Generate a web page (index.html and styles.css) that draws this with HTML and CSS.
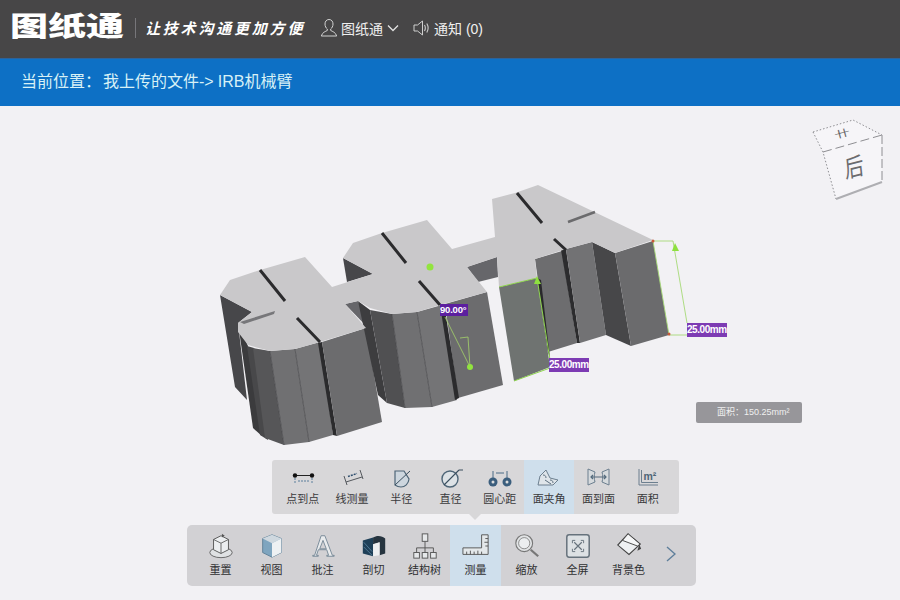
FILE: index.html
```html
<!DOCTYPE html>
<html lang="zh-CN">
<head>
<meta charset="utf-8">
<title>图纸通</title>
<link rel="stylesheet" href="styles.css">
</head>
<body>
<div class="page">
  <header class="topbar">
    <div class="logo">图纸通</div>
    <div class="divider"></div>
    <div class="slogan">让技术沟通更加方便</div>
    <div class="nav-user">
      <svg class="nav-icon" viewBox="0 0 18 20" width="18" height="20"><path d="M9 1.500c-2.600 0-4 2-4 4.500 0 2.300 1 4 2.300 5v1.500c-1.500.8-5 1.800-6 5.500h15.400c-1-3.700-4.500-4.700-6-5.500V11c1.300-1 2.300-2.700 2.300-5 0-2.500-1.400-4.500-4-4.500z" fill="none" stroke="#d2d2d2" stroke-width="1"/></svg>
      <span>图纸通</span>
      <svg class="chev" viewBox="0 0 12 8" width="12" height="8"><path d="M1 1.500l5 5 5-5" fill="none" stroke="#e2e2e2" stroke-width="1.300"/></svg>
    </div>
    <div class="nav-notice">
      <svg class="nav-icon" viewBox="0 0 17 16" width="17" height="16"><path d="M1 5h3.500L9.500 1v14l-5-4H1z" fill="none" stroke="#cfcfcf" stroke-width="1"/><path d="M11.500 5c1 1.800 1 4.200 0 6M13.800 3.500c1.600 2.700 1.600 6.300 0 9" fill="none" stroke="#cfcfcf" stroke-width="1.100"/></svg>
      <span>通知 (0)</span>
    </div>
  </header>

  <div class="crumb"><span class="crumb-label">当前位置：</span><span>我上传的文件<span class="crumb-arrow">-&gt;</span>IRB机械臂</span></div>

  <main class="viewer">
    <svg class="model" viewBox="0 106 900 494" width="900" height="494">
      <!-- left block sides -->
      <polygon fill="#47474a" points="220,295 252,312 238,323 247,400 235,387"/>
      <polygon fill="#3b3b3d" points="238,323 248,346 262,436 253,428"/>
      <polygon fill="#48484a" points="247,346 254,348 268,440 260,435"/>
      <polygon fill="#565658" points="253,348 270,351 284,445 265,438"/>
      <polygon fill="#707072" points="270,351 295,349 309,442 284,445"/>
      <polygon fill="#747476" points="295,349 320,342 333,435 309,442"/>
      <polygon fill="#2b2b2d" points="318,343 322,342 337,436 333,435"/>
      <polygon fill="#6c6c6e" points="322,342 366,328 382,422 337,436"/>
      <path d="M270 351l14 94M295 349l14 93" stroke="#444446" stroke-width=".7"/>
      <!-- bridge underside -->
      <polygon fill="#66666a" points="345,304 358,301 368,328"/>
      <polygon fill="#66666a" points="467,267 497,257 498,277 478,282"/>
      <!-- middle block sides -->
      <polygon fill="#47474a" points="343,258 373,274 347,282"/>
      <polygon fill="#3d3d3f" points="358,301 370,310 387,403 378,395"/>
      <polygon fill="#505052" points="370,310 392,314 405,408 387,403"/>
      <polygon fill="#707072" points="392,314 417,312 432,407 405,408"/>
      <polygon fill="#747476" points="417,312 442,305 457,400 432,407"/>
      <polygon fill="#6c6c6e" points="445,304 487,292 503,385 458,398"/>
      <polygon fill="#2b2b2d" points="440,305 446,316 459,398 455,400"/>
      <path d="M392 314l13 94M417 312l15 95" stroke="#444446" stroke-width=".7"/>
      <!-- right block sides -->
      <polygon fill="#6f7371" points="499,287 537,278 550,367 514,381"/>
      <polygon fill="#6d6d6f" points="535,259 562,251 577,343 548,352"/>
      <polygon fill="#29292b" points="537,278 541,280 550,358 548,352"/>
      <polygon fill="#2c2c2e" points="561,250 566,249 580,343 577,343"/>
      <polygon fill="#727274" points="566,249 592,242 606,335 580,343"/>
      <polygon fill="#474749" points="592,242 615,253 631,346 606,335"/>
      <polygon fill="#6b6b6d" points="615,253 653,241 669,335 631,346"/>
      <!-- top face -->
      <polygon fill="#c9c8ca" points="220,295 230,280 260,270 305,257 332,287 373,274 343,258 353,243 382,233 427,220 452,249 495,237 492,199 515,193 538,185 653,240 615,253 592,242 566,249 535,259 537,278 499,287 497,257 467,267 487,292 440,305 417,312 392,314 370,308 358,301 345,304 366,328 320,342 295,349 270,351 248,345 238,332 238,323 252,312"/>
      <polygon fill="#77777a" points="240,322 275,311 274,314 244,324"/>
      <!-- slots -->
      <path d="M260 270l25 31M297 318l23 24M382 233l24 30M419 281l21 24M517 193l25 30M554 239l12 11" stroke="#2b2b2d" stroke-width="3" fill="none"/>
      <path d="M568 222l27-10" stroke="#6b6b6d" stroke-width="2.500" fill="none"/>
      <!-- measures -->
      <circle cx="430" cy="267" r="3.500" fill="#92e43f"/>
      <path d="M445 317l25 50-2-30-8 1" fill="none" stroke="#a5d36a" stroke-width=".8"/>
      <circle cx="470" cy="367" r="3" fill="#92e43f"/>
      <path d="M499 287l38-9 13 82M514 381l36-13" fill="none" stroke="#8ed44d" stroke-width="1"/>
      <polygon points="537,276 534,284 541,284" fill="#8ee03f"/>
      <path d="M653 241h20l14 82M669 335h18M653 241l16 94" fill="none" stroke="#a6d976" stroke-width=".9"/>
      <polygon points="675,243 672,251 679,251" fill="#8ee03f"/>
      <circle cx="653" cy="241" r="1.500" fill="#c9593a"/>
      <circle cx="669" cy="334" r="1.500" fill="#c9593a"/>
      <!-- view cube -->
      <polygon points="813,132 853,120 882,135 882,182 836,199 823,152" fill="#f6f5f8"/>
      <g fill="none" stroke="#8e8e92">
        <path d="M813 132l40-12 29 15" stroke-dasharray="1.500 2"/>
        <path d="M813 132l10 20 13 47" stroke-dasharray="1.500 2"/>
        <path d="M823 152l59-17" stroke-dasharray="9 4"/>
        <path d="M882 135v47" stroke-dasharray="9 3"/>
        <path d="M836 199l46-17" stroke="#aeaeb2" stroke-width="2"/>
      </g>
      <text class="cube-top" transform="translate(843 137) rotate(-15) scale(1 .6)">卄</text>
      <text class="cube-front" transform="translate(855 176) rotate(-14) skewX(-8) scale(.85 1.05)">后</text>
    </svg>

    <div class="label label-angle">90.00°</div>
    <div class="label label-mid">25.00mm</div>
    <div class="label label-right">25.00mm</div>
    <div class="area">面积：150.25mm²</div>

    <div class="subtools">
      <div class="tool"><svg viewBox="0 0 28 24"><path d="M6 8.500h17" stroke="#222" stroke-width="1"/><circle cx="6" cy="8.500" r="2.200" fill="#111"/><circle cx="23" cy="8.500" r="2.200" fill="#111"/><path d="M6 11v5M23 11v5M9 14h11" stroke="#5a7f9c" stroke-width="1" stroke-dasharray="2 1"/></svg><span>点到点</span></div>
      <div class="tool"><svg viewBox="0 0 28 24"><path d="M6 9l3 9M22 3l3 9M8 15l16-5" fill="none" stroke="#55595e" stroke-width="1"/><path d="M10 9.500l9-3" stroke="#2f4f6f" stroke-width="1.500" stroke-dasharray="2 1"/></svg><span>线测量</span></div>
      <div class="tool"><svg viewBox="0 0 28 24"><path d="M8 4h9l5 8c-.5 5-4 8-8 8-2 0-4-.5-6-2z" fill="#cdd6de" stroke="#4e6577" stroke-width="1.200"/><path d="M8 18L23 4" stroke="#3a4e5e" stroke-width="1"/></svg><span>半径</span></div>
      <div class="tool"><svg viewBox="0 0 28 24"><circle cx="13" cy="12" r="8" fill="#dde2e6" stroke="#4e6577" stroke-width="1.400"/><path d="M7 18L22 3M22 3h4" fill="none" stroke="#3a4e5e" stroke-width="1.100"/></svg><span>直径</span></div>
      <div class="tool"><svg viewBox="0 0 28 24"><circle cx="7" cy="15" r="4.500" fill="#3b5e7d"/><circle cx="21" cy="15" r="4.500" fill="#3b5e7d"/><circle cx="7" cy="15" r="1.500" fill="#ddd"/><circle cx="21" cy="15" r="1.500" fill="#ddd"/><path d="M7 4v8M21 4v8M10 6h8" stroke="#3b5e7d" stroke-width=".9" fill="none"/></svg><span>圆心距</span></div>
      <div class="tool is-on"><svg viewBox="0 0 28 24"><path d="M3 18l2-9 6-6 4 8 8 2-5 5z" fill="#dfe5ea" stroke="#6c7f8f" stroke-width="1"/><path d="M8 8c2 0 3 1 3 3M10 13l6 4M15 13c2 0 3 1 3 3" fill="none" stroke="#5c6f7f" stroke-width="1"/></svg><span>面夹角</span></div>
      <div class="tool"><svg viewBox="0 0 28 24"><path d="M4 2l7 3c-1 3-1 7 0 10l-7 3zM25 2l-7 3c1 3 1 7 0 10l7 3z" fill="#d6dadd" stroke="#6c7f8f" stroke-width="1"/><path d="M7 10h15M9 8l-2 2 2 2M20 8l2 2-2 2" fill="none" stroke="#546a7c" stroke-width="1.200"/></svg><span>面到面</span></div>
      <div class="tool"><svg viewBox="0 0 28 24"><path d="M5 2v16h19M7.500 3v12.500H24" fill="none" stroke="#6c7f8f" stroke-width="1"/><text class="m2" x="9.500" y="12.500">m²</text></svg><span>面积</span></div>
    </div>
    <div class="caret"></div>
    <div class="maintools">
      <div class="tool"><svg viewBox="0 0 30 30"><ellipse cx="15" cy="22" rx="12" ry="5.500" fill="#dfe1e3" stroke="#555" stroke-width=".9"/><path d="M15 4l8 4v11l-8 4-8-4V8z" fill="#eceef0" stroke="#555" stroke-width="1"/><path d="M7 8l8 4 8-4M15 12v11" fill="none" stroke="#555" stroke-width=".9"/><path d="M16 2l3 2-3 2z" fill="#555"/></svg><span>重置</span></div>
      <div class="tool"><svg viewBox="0 0 30 30"><path d="M15 3l10 4v15l-10 5-10-5V7z" fill="#7fa5bf" stroke="#5f7f96" stroke-width="1"/><path d="M5 7l10 5 10-5-10-4z" fill="#cfd8df"/><path d="M15 12l10-5v15l-10 5z" fill="#eef1f3"/></svg><span>视图</span></div>
      <div class="tool"><svg viewBox="0 0 30 30"><path d="M13 4h4l8 21h2v1h-8v-1h2l-2-6h-9l-2 6h2v1H4v-1h2zM15 9l-3.500 9h7z" fill="#e9ebed" fill-rule="evenodd" stroke="#6b7f8f" stroke-width=".9"/></svg><span>批注</span></div>
      <div class="tool"><svg viewBox="0 0 30 30"><path d="M3 9l11-3v20L3 23z" fill="#1f4058"/><path d="M14 6c4-3 10-2 13 1v16l-6 2V11l-7 2z" fill="#26343f"/><path d="M14 13l7-2v14l-7 1z" fill="#eef0f2"/><path d="M4 11l9 10M4 16l9 9" stroke="#5f8aa8" stroke-width=".8"/></svg><span>剖切</span></div>
      <div class="tool"><svg viewBox="0 0 30 30"><path d="M15 10v7M6 22v-5h18v5M15 17v5" fill="none" stroke="#555" stroke-width="1"/><rect x="12" y="2" width="6" height="8" fill="#e6e8ea" stroke="#555"/><rect x="3" y="22" width="6" height="6" fill="#e6e8ea" stroke="#555"/><rect x="12" y="22" width="6" height="6" fill="#e6e8ea" stroke="#555"/><rect x="21" y="22" width="6" height="6" fill="#e6e8ea" stroke="#555"/></svg><span>结构树</span></div>
      <div class="tool is-on"><svg viewBox="0 0 30 30"><path d="M28 3h-7v14H1v7h27z" fill="#e4e8ea" stroke="#555" stroke-width="1"/><path d="M5 24v-3M9 24v-4M13 24v-3M17 24v-4M21 24v-3M28 7h-3M28 11h-4M28 15h-3" stroke="#555" stroke-width="1"/></svg><span>测量</span></div>
      <div class="tool"><svg viewBox="0 0 30 30"><circle cx="12" cy="12" r="9" fill="#e2e4e6" stroke="#777" stroke-width="1.200"/><circle cx="12" cy="12" r="6" fill="#eceef0" stroke="#888" stroke-width="1"/><path d="M19 19l8 7" stroke="#777" stroke-width="2.400"/></svg><span>缩放</span></div>
      <div class="tool"><svg viewBox="0 0 30 30"><rect x="3" y="3" width="24" height="24" rx="2.500" fill="#dde1e4" stroke="#66727c" stroke-width="1.600"/><path d="M11 11l8 8M19 11l-8 8" stroke="#66727c" stroke-width="1.200"/><path d="M9 12V9h3M18 9h3v3M21 18v3h-3M12 21H9v-3" fill="none" stroke="#66727c" stroke-width="1"/></svg><span>全屏</span></div>
      <div class="tool"><svg viewBox="0 0 30 30"><path d="M14 2l13 11-12 11L3 14z" fill="#eef0f2" stroke="#444" stroke-width="1.200"/><path d="M8 9l6-7 13 11-3 2z" fill="#f6f7f8" stroke="#444" stroke-width="1"/><path d="M26 13l2 5-4 2z" fill="#444"/></svg><span>背景色</span></div>
      <div class="more"><svg viewBox="0 0 10 16" width="10" height="16"><path d="M1 1l8 7-8 7" fill="none" stroke="#5f7f9b" stroke-width="1.400"/></svg></div>
    </div>
  </main>
</div>
</body>
</html>
```
FILE: styles.css
```css
* { box-sizing: border-box; }
html, body { margin: 0; padding: 0; }
body {
  font-family: "Liberation Sans", "Noto Sans CJK SC", sans-serif;
  background: #f2f1f4;
}
.page {
  width: 900px;
  height: 600px;
  display: flex;
  flex-direction: column;
  overflow: hidden;
}
.topbar {
  height: 58px;
  flex: none;
  background: #474647;
  display: flex;
  align-items: center;
  padding: 0 0 2px 10px;
  color: #f0f0f0;
  font-size: 14px;
}
.logo {
  width: 114px;
  font: 900 38px/40px "Noto Sans CJK SC", sans-serif;
  color: #fff;
  white-space: nowrap;
  margin-bottom: 9px;
  transform: scaleY(.72);
}
.divider {
  width: 1px;
  height: 20px;
  background: #77767a;
  margin: 0 9px 0 11px;
}
.slogan {
  width: 161px;
  font: italic 700 15px/20px "Noto Sans CJK SC", sans-serif;
  letter-spacing: 2.800px;
  color: #fff;
  white-space: nowrap;
}
.nav-user, .nav-notice {
  display: flex;
  align-items: center;
  white-space: nowrap;
}
.nav-user { margin-left: 14px; gap: 3px; }
.nav-notice { margin-left: 14px; gap: 4px; }
.nav-icon { flex: none; }
.chev { margin-left: 1px; }
.crumb {
  height: 48px;
  flex: none;
  background: #0d70c5;
  border-top: 1px solid #2d6299;
  display: flex;
  align-items: center;
  gap: 2px;
  padding: 0 0 5px 21px;
  font-size: 16px;
  color: #d8f1f6;
}
.crumb-arrow { margin: 0 4px 0 0; }
.viewer {
  position: relative;
  flex: 1;
  display: flex;
  flex-direction: column;
  justify-content: flex-end;
  align-items: flex-start;
  padding-bottom: 14px;
  background: #f2f1f4;
}
.model { position: absolute; left: 0; top: 0; }
.cube-top { font: 16px "Noto Sans CJK SC", sans-serif; fill: #666; text-anchor: middle; }
.cube-front { font: 23px "Noto Sans CJK SC", sans-serif; fill: #6b6b6e; text-anchor: middle; }
.label {
  position: absolute;
  height: 14px;
  background: #7d3bb3;
  color: #fff;
  font-size: 10px;
  line-height: 14px;
  font-weight: 700;
  letter-spacing: -.45px;
  white-space: nowrap;
  overflow: hidden;
}
.label-angle { left: 440px; top: 198px; width: 28px; height: 12px; line-height: 12px; background: #5c1f9f; font-size: 9.500px; letter-spacing: -.2px; }
.label-mid { left: 549px; top: 252px; width: 40px; }
.label-right { left: 687px; top: 217px; width: 40px; }
.area {
  position: absolute;
  left: 696px;
  top: 296px;
  width: 106px;
  height: 21px;
  padding-left: 21px;
  border-radius: 2px;
  background: #97969a;
  color: #f0f0f0;
  font-size: 9px;
  line-height: 21px;
  white-space: nowrap;
}
.subtools, .maintools {
  display: flex;
  flex: none;
  border-radius: 3px;
  position: relative;
}
.subtools {
  margin-left: 272px;
  width: 407px;
  height: 54px;
  padding-left: 6px;
  background: #d8d7d9;
}
.maintools {
  margin-left: 187px;
  width: 509px;
  height: 61px;
  padding-left: 8px;
  background: #d2d1d4;
  border-radius: 5px;
}
.caret {
  width: 0;
  height: 0;
  margin: 0 0 5px 469px;
  border-left: 6px solid transparent;
  border-right: 6px solid transparent;
  border-top: 6px solid #d8d7d9;
}
.tool {
  display: flex;
  flex-direction: column;
  align-items: center;
  flex: none;
  font-size: 11px;
  line-height: 14px;
  color: #3a3a3c;
  white-space: nowrap;
}
.subtools .tool { width: 49.300px; padding-top: 7px; }
.subtools .tool svg { width: 28px; height: 24px; }
.subtools .tool span { margin-top: 1px; }
.maintools .tool { width: 51px; padding-top: 7px; }
.maintools .tool svg { width: 28px; height: 28px; }
.maintools .tool span { margin-top: 3px; color: #2f2f31; }
.tool.is-on { background: #cfdfec; }
.more {
  display: flex;
  align-items: center;
  padding: 0 0 4px 12px;
}
.m2 { font: 700 10.500px "Liberation Sans", sans-serif; fill: #4e6577; }
```
